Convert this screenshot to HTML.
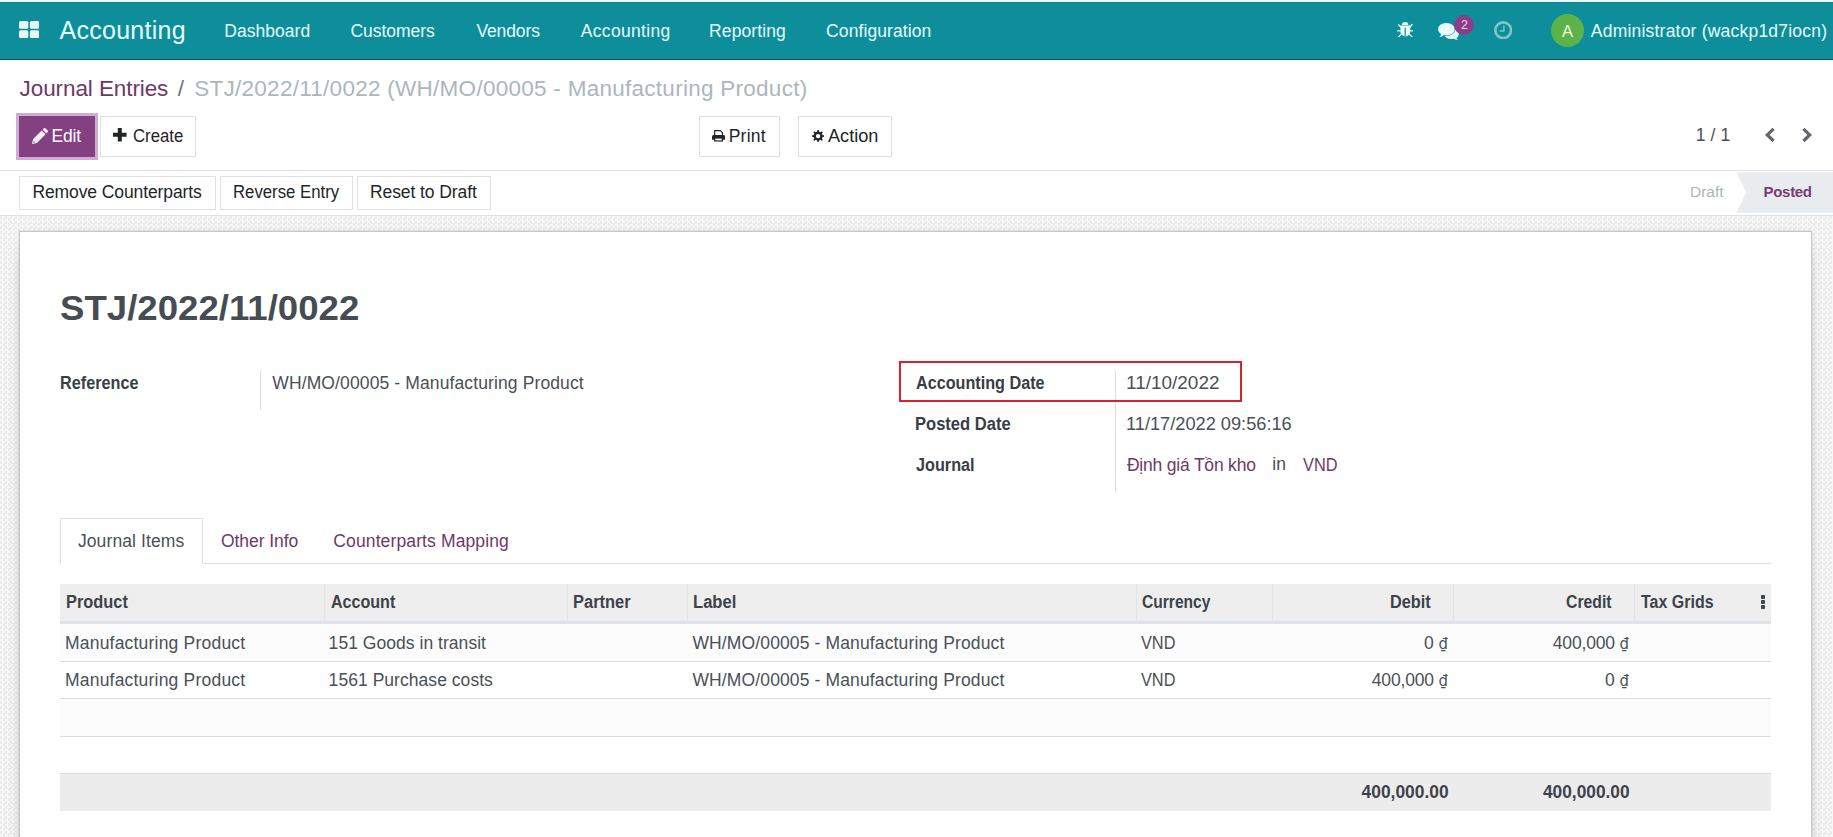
<!DOCTYPE html>
<html lang="en">
<head>
<meta charset="utf-8">
<title>Odoo - STJ/2022/11/0022</title>
<style>
*{box-sizing:border-box;margin:0;padding:0}
html,body{width:1833px;height:837px;overflow:hidden;background:#fff}
body{font-family:"Liberation Sans","DejaVu Sans",sans-serif;font-size:17.5px;color:#495057;position:relative;line-height:1.5}
a{text-decoration:none;color:inherit}
ul,ol{list-style:none}
button{font-family:inherit;cursor:pointer}
.abs{position:absolute;white-space:nowrap}
svg{display:block}

/* ---------- top strip + navbar ---------- */
#strip{position:absolute;left:0;top:0;width:1833px;height:2px;background:#e6fdfd}
#nav{position:absolute;left:0;top:2px;width:1833px;height:58px;background:#0d8e9a;border-bottom:1px solid #0b5561;color:#fff;box-shadow:inset 0 1px 0 #1e7d8c}
#nav .abs{color:#e6fdff}
header .menu{font-size:17.5px;line-height:20px;top:19px}
#brand{font-size:25px;line-height:30px;top:13px;left:59px}

/* ---------- control panel ---------- */
#cp{position:absolute;left:0;top:60px;width:1833px;height:111px;background:#fff;border-bottom:1px solid #e2e2e2}
.bc{font-size:22.5px;line-height:28px;top:14px}
.btn{position:absolute;height:41px;border:1px solid #e1e1e1;background:#fff;color:#212529;font-size:17.5px}
.btn .abs{line-height:20px;top:9px}
#btn-edit{left:19px;top:56px;width:76px;background:#834182;border-color:#834182;color:#fff;box-shadow:0 0 0 3px #d0add0}

/* ---------- status bar ---------- */
#sb{position:absolute;left:0;top:171px;width:1833px;height:45px;background:#fff;border-bottom:1px solid #dfe1e3}
.sbtn{position:absolute;top:5px;height:34px;border:1px solid #e1e1e1;background:#fff;color:#212529;font-size:17.5px}
.sbtn .abs{line-height:20px;top:6px}

/* ---------- content ---------- */
#bg{position:absolute;left:0;top:216px;width:1833px;height:621px;background:repeating-conic-gradient(#f8f8f8 0 25%,#ebebeb 0 50%) 0 0/5px 5px}
#sheet{position:absolute;left:19px;top:15px;width:1793px;height:640px;background:#fff;border:1px solid #c4c6c8;box-shadow:0 0 2px rgba(0,0,0,.16),0 5px 20px -15px #000}
/* coordinates inside #sheet are page coords minus (20,232) */
#title{font-size:35px;font-weight:bold;line-height:40px;color:#464c53;left:41px;top:56px}
.lbl{font-weight:bold;color:#383e45;line-height:20px}
.val{color:#495057;line-height:20px}
.lnk{color:#6c3a68}
.vsep{position:absolute;width:1px;background:#dcdfe2}
#redbox{position:absolute;left:879px;top:129px;width:343px;height:41px;border:2px solid #d8232a}
.tab{font-size:17.5px;line-height:20px;top:299px;color:#6c3a68}
#tabline{position:absolute;left:40px;top:331px;width:1711px;height:1px;background:#e0e0e0}
#tabact{position:absolute;left:40px;top:286px;width:143px;height:46px;border:1px solid #e0e0e0;border-bottom:1px solid #fff;background:#fff}
/* table */
#tbl{position:absolute;left:40px;top:352px;width:1711px;border-collapse:separate;border-spacing:0;table-layout:fixed;font-size:17.5px}
#tbl th,#tbl td{padding:0;position:relative;white-space:nowrap;overflow:visible}
#tbl thead th{height:40px;background:#eeeeee;border-bottom:3px solid #dfe2e6;border-left:1px solid #e2e4e6;font-weight:bold;color:#3d434a;text-align:left}
#tbl thead th:first-child{border-left:0}
#tbl tbody td{border-bottom:1px solid #d9dcdf}
#tbl tbody tr:nth-child(1) td{height:38px;background:#fcfcfc}
#tbl tbody tr:nth-child(2) td{height:37px}
#tbl tbody tr:nth-child(3) td{height:38px;background:#fcfcfc}
#tbl tbody tr:nth-child(4) td{height:36px;border-bottom:0}
#tbl tfoot td{height:38px;background:#ececec;border-top:1px solid #d9d9d9;font-weight:bold;color:#3d434a}
table .abs{line-height:20px;top:9px}
.dong{font-family:"DejaVu Sans Condensed","DejaVu Sans",sans-serif;font-size:16.5px;letter-spacing:0}
#r1c6,#r1c7,#r2c6,#r2c7{right:5px}
#r1c7,#r2c6{letter-spacing:-0.17px}
thead .abs{top:8px}
#f6,#f7{font-size:18.5px}
/*TUNE-START*/
#brand{left:59.61px;top:13.02px;letter-spacing:0.256px}
#m1{left:224.30px;top:19.02px;letter-spacing:0.026px}
#m2{left:350.50px;top:19.02px;letter-spacing:-0.057px}
#m3{left:476.41px;top:19.02px;letter-spacing:-0.111px}
#m4{left:580.80px;top:19.02px;letter-spacing:0.315px}
#m5{left:709.11px;top:19.02px;letter-spacing:0.105px}
#m6{left:826.11px;top:19.02px;letter-spacing:0.085px}
#user{left:1590.80px;top:19.02px;letter-spacing:0.212px}
#bc1{left:19.61px;top:15.02px;letter-spacing:-0.095px}
#bc2{left:177.71px;top:15.02px}
#bc3{left:194.21px;top:15.02px;letter-spacing:0.271px}
#t-edit{left:31.50px;top:9.02px;letter-spacing:-0.165px}
#t-create{left:31.80px;top:9.02px;letter-spacing:0;transform:scaleX(0.9576);transform-origin:0 50%}
#t-print{left:28.71px;top:9.02px;letter-spacing:0.244px}
#t-action{left:29.00px;top:9.02px;letter-spacing:0;transform:scaleX(1.0374);transform-origin:0 50%}
#pager{left:1695.71px;top:65.02px;letter-spacing:0.143px}
#s1{left:12.41px;top:5.02px;letter-spacing:-0.103px}
#s2{left:11.95px;top:5.02px;letter-spacing:0;transform:scaleX(0.9571);transform-origin:0 50%}
#s3{left:12.00px;top:5.02px;letter-spacing:-0.085px}
#title{left:39.95px;top:56.02px;letter-spacing:0;transform:scaleX(1.0463);transform-origin:0 50%}
#l-ref{left:40.07px;top:141.02px;letter-spacing:0;transform:scaleX(0.9272);transform-origin:0 50%}
#v-ref{left:252.30px;top:141.02px;letter-spacing:0.118px}
#l-acc{left:896.30px;top:141.02px;letter-spacing:0;transform:scaleX(0.9245);transform-origin:0 50%}
#v-acc{left:1106.02px;top:141.02px;letter-spacing:0;transform:scaleX(1.0832);transform-origin:0 50%}
#l-post{left:895.36px;top:182.02px;letter-spacing:0;transform:scaleX(0.9451);transform-origin:0 50%}
#v-post{left:1106.07px;top:182.02px;letter-spacing:0;transform:scaleX(1.0403);transform-origin:0 50%}
#l-jrn{left:896.30px;top:223.02px;letter-spacing:0;transform:scaleX(0.9269);transform-origin:0 50%}
#v-jrn{left:1106.91px;top:223.02px;letter-spacing:-0.198px}
#v-in{left:1252.21px;top:222.02px;letter-spacing:0.208px}
#v-cur{left:1283.21px;top:223.02px;letter-spacing:0;transform:scaleX(0.9335);transform-origin:0 50%}
#tab1{left:57.91px;top:299.02px;letter-spacing:0.109px}
#tab2{left:200.91px;top:299.02px;letter-spacing:-0.044px}
#tab3{left:313.30px;top:299.02px;letter-spacing:0.125px}
#h1{left:5.97px;top:8.02px;letter-spacing:0;transform:scaleX(0.9357);transform-origin:0 50%}
#h2{left:5.91px;top:8.02px;letter-spacing:0;transform:scaleX(0.9177);transform-origin:0 50%}
#h3{left:4.67px;top:8.02px;letter-spacing:0;transform:scaleX(0.9409);transform-origin:0 50%}
#h4{left:4.55px;top:8.02px;letter-spacing:0;transform:scaleX(0.9485);transform-origin:0 50%}
#h5{left:5.41px;top:8.02px;letter-spacing:0;transform:scaleX(0.8909);transform-origin:0 50%}
#h6{right:22.47px;left:auto;top:8.02px;letter-spacing:0;transform:scaleX(0.9319);transform-origin:100% 50%}
#h7{right:22.36px;left:auto;top:8.02px;letter-spacing:0;transform:scaleX(0.9008);transform-origin:100% 50%}
#h8{left:5.91px;top:8.02px;letter-spacing:0;transform:scaleX(0.9134);transform-origin:0 50%}
#r1c1{left:5.00px;top:9.02px;letter-spacing:0.204px}
#r1c2{left:4.61px;top:9.02px;letter-spacing:0.039px}
#r1c4{left:5.41px;top:9.02px;letter-spacing:0.132px}
#r1c5{left:5.30px;top:9.02px;letter-spacing:0;transform:scaleX(0.9307);transform-origin:0 50%}
#r2c1{left:5.00px;top:8.02px;letter-spacing:0.204px}
#r2c2{left:4.61px;top:8.02px;letter-spacing:0.045px}
#r2c4{left:5.41px;top:8.02px;letter-spacing:0.132px}
#r2c5{left:5.30px;top:8.02px;letter-spacing:0;transform:scaleX(0.9307);transform-origin:0 50%}
#f6{right:4.63px;left:auto;top:8.02px;letter-spacing:0;transform:scaleX(0.9393);transform-origin:100% 50%}
#f7{right:4.34px;left:auto;top:8.02px;letter-spacing:0;transform:scaleX(0.9360);transform-origin:100% 50%}
#st-draft{left:1690.24px;top:12.02px;letter-spacing:0;transform:scaleX(1.0693);transform-origin:0 50%}
#st-posted{left:1763.61px;top:12.02px;letter-spacing:-0.331px}
#badge-n{left:1460.91px;top:16.02px}
#avatar-a{left:1562.00px;top:19.02px}
#r1c6{top:9.02px}
#r1c7{top:9.02px}
#r2c6{top:8.02px}
#r2c7{top:8.02px}
/*TUNE-END*/
</style>
</head>
<body>
<div id="strip"></div>

<header id="nav">
  <a class="abs" id="apps" style="left:19px;top:19px"><svg width="20.4" height="17.5" viewBox="0 0 21 18" preserveAspectRatio="none"><rect x="0" y="0" width="9.6" height="8" rx="1.6" fill="#e8f8fa"/><rect x="11.2" y="0" width="9.6" height="8" rx="1.6" fill="#e8f8fa"/><rect x="0" y="9.6" width="9.6" height="8" rx="1.6" fill="#e8f8fa"/><rect x="11.2" y="9.6" width="9.6" height="8" rx="1.6" fill="#e8f8fa"/></svg></a>
  <a class="abs" id="brand">Accounting</a>
  <nav>
    <a class="abs menu" id="m1">Dashboard</a>
    <a class="abs menu" id="m2">Customers</a>
    <a class="abs menu" id="m3">Vendors</a>
    <a class="abs menu" id="m4">Accounting</a>
    <a class="abs menu" id="m5">Reporting</a>
    <a class="abs menu" id="m6">Configuration</a>
  </nav>

  <a class="abs" id="i-bug" style="left:1396.8px;top:19.7px"><svg width="16.5" height="15.4" viewBox="0 0 16.5 15.4"><path d="M3.900 5.300L1.200 2.300M12.700 5.300l2.700-3M3.600 8.800H0.200M13.100 8.800h3.400M4.400 12.300L1.200 15M12.200 12.300l3.200 2.700" stroke="#dffcfd" stroke-width="1.300" fill="none"/><path d="M4.900 3.100a3.250 3.100 0 0 1 6.500 0z" fill="#e3fcfd"/><path d="M3.400 3.600h9.900v6.300a4.950 4.500 0 0 1-9.900 0z" fill="#e9fbfc"/><rect x="7.500" y="5.700" width="1.400" height="8.400" fill="#2f9aa4"/></svg></a>
  <a class="abs" id="i-chat" style="left:1437.5px;top:20.9px"><svg width="21.200" height="16.800" viewBox="0 0 21.2 16.8"><path d="M13.600 6c4 0 7.300 2.300 7.300 5.200 0 1.500-.900 2.900-2.400 3.800.3.700.8 1.300 1.500 1.700-1.700.1-3.100-.3-4.200-.9-.7.200-1.400.2-2.200.2-4 0-7.300-2.100-7.300-4.800S9.600 6 13.600 6z" fill="#dffbfc"/><path d="M8.350 0C12.960 0 16.700 2.780 16.700 6.200S12.960 12.400 8.350 12.400C7.500 12.400 6.700 12.300 5.900 12.100 4.700 13.300 3.100 14 1.200 14.100 2.300 13.200 2.900 12.100 3.100 10.900 1.200 9.700 0 8 0 6.200 0 2.780 3.740 0 8.350 0z" fill="#eafcfd" stroke="#0d8e9a" stroke-width="1.100" paint-order="stroke"/></svg></a>
  <span class="abs" id="badge" style="left:1454.1px;top:12.900px;width:20.400px;height:20.400px;border-radius:50%;background:#8a3e8a"></span>
  <span class="abs" id="badge-n" style="font-size:12.5px;line-height:14px;color:#f9d2f5">2</span>
  <a class="abs" id="i-clock" style="left:1493.9px;top:19.1px"><svg width="18.4" height="18.4" viewBox="0 0 18.4 18.4"><circle cx="9.2" cy="9.2" r="7.85" fill="none" stroke="#7ec5cc" stroke-width="2.6"/><path d="M9.9 4.6v5.4H5.7" fill="none" stroke="#7ec5cc" stroke-width="1.5"/></svg></a>
  <span class="abs" id="avatar" style="left:1551px;top:12.3px;width:33px;height:33px;border-radius:50%;background:#5cb34a"></span>
  <span class="abs" id="avatar-a" style="font-size:16.5px;line-height:20px;color:#f4fbe3">A</span>
  <a class="abs menu" id="user">Administrator (wackp1d7iocn)</a>
</header>

<section id="cp">
  <ol>
    <li class="abs bc" id="bc1" style="color:#6c3a68">Journal Entries</li>
    <li class="abs bc" id="bc2" style="color:#6c757d">/</li>
    <li class="abs bc" id="bc3" style="color:#adb5bd">STJ/2022/11/0022 (WH/MO/00005 - Manufacturing Product)</li>
  </ol>
  <button class="btn" id="btn-edit"><svg class="abs" style="left:11.900px;top:11px" width="16" height="16" viewBox="0 0 16 16"><path d="M0 16L1.100 11.100 9.750 2.450 13.550 6.250 4.900 14.900z" fill="#fbeffa"/><path d="M10.600 1.600L11.750.450a1.350 1.350 0 0 1 1.900 0l1.900 1.900a1.350 1.350 0 0 1 0 1.900L14.400 5.400z" fill="#fbeffa"/><circle cx="2" cy="14" r=".75" fill="#834182"/></svg><span class="abs" id="t-edit">Edit</span></button>
  <button class="btn" id="btn-create" style="left:100px;top:56px;width:96px"><svg class="abs" style="left:12.4px;top:11.4px" width="13.6" height="13.6" viewBox="0 0 13.6 13.6"><path d="M4.8 0h4v4.800h4.800v4h-4.800v4.800h-4v-4.800h-4.800v-4h4.800z" fill="#212529"/></svg><span class="abs" id="t-create">Create</span></button>
  <button class="btn" id="btn-print" style="left:699px;top:56px;width:81px"><svg class="abs" style="left:12.1px;top:13.2px" width="13.1" height="11.6" viewBox="0 0 13.1 11.6"><path d="M2.7 5V0.6h5.600l2.100 2.100V5" fill="#fff" stroke="#212529" stroke-width="1.2"/><path d="M1.500 4.900h10.100a1.500 1.500 0 0 1 1.500 1.500v3.400h-13.100v-3.400a1.500 1.500 0 0 1 1.500-1.500z" fill="#212529"/><rect x="2.7" y="8" width="7.700" height="3" fill="#fff" stroke="#212529" stroke-width="1.2"/></svg><span class="abs" id="t-print">Print</span></button>
  <button class="btn" id="btn-action" style="left:798px;top:56px;width:94px"><svg class="abs" style="left:12.7px;top:13.2px" width="12.2" height="12.2" viewBox="0 0 12.2 12.2"><path fill-rule="evenodd" d="M10.63 5.27 L12.16 5.38 L12.16 6.82 L10.63 6.93 L9.88 8.72 L10.89 9.88 L9.88 10.89 L8.72 9.88 L6.93 10.63 L6.82 12.16 L5.38 12.16 L5.27 10.63 L3.48 9.88 L2.32 10.89 L1.31 9.88 L2.32 8.72 L1.57 6.93 L0.04 6.82 L0.04 5.38 L1.57 5.27 L2.32 3.48 L1.31 2.32 L2.32 1.31 L3.48 2.32 L5.27 1.57 L5.38 0.04 L6.82 0.04 L6.93 1.57 L8.72 2.32 L9.88 1.31 L10.89 2.32 L9.88 3.48Z M6.1 3.900a2.200 2.200 0 1 0 0 4.400a2.200 2.200 0 1 0 0-4.400z" fill="#212529"/></svg><span class="abs" id="t-action">Action</span></button>
  <span class="abs" id="pager" style="line-height:20px;color:#495057">1 / 1</span>

  <a class="abs" id="pg-prev" style="left:1763.5px;top:67px"><svg width="12" height="16" viewBox="0 0 12 16"><path d="M9.600 1.800L3.300 7.900l6.300 6.100" fill="none" stroke="#63676c" stroke-width="3.200"/></svg></a>
  <a class="abs" id="pg-next" style="left:1800.5px;top:67px"><svg width="12" height="16" viewBox="0 0 12 16"><path d="M2.400 1.800l6.300 6.100-6.300 6.100" fill="none" stroke="#63676c" stroke-width="3.200"/></svg></a>
</section>

<section id="sb">
  <button class="sbtn" style="left:19px;width:197px"><span class="abs" id="s1">Remove Counterparts</span></button>
  <button class="sbtn" style="left:220px;width:133px"><span class="abs" id="s2">Reverse Entry</span></button>
  <button class="sbtn" style="left:357px;width:134px"><span class="abs" id="s3">Reset to Draft</span></button>

  <svg class="abs" style="left:1730px;top:1px" width="103" height="41" viewBox="0 0 103 41"><path d="M6.300 0.300H103V40.800H6.300L16.300 20.500z" fill="#e9ecef"/></svg>
  <span class="abs" id="st-draft" style="font-size:14.500px;line-height:18px;color:#adb5bd">Draft</span>
  <span class="abs" id="st-posted" style="font-size:15px;font-weight:bold;line-height:18px;color:#7c3a78">Posted</span>
</section>

<main id="bg">
  <div id="sheet">
    <h1 class="abs" id="title">STJ/2022/11/0022</h1>

    <label class="abs lbl" id="l-ref">Reference</label>
    <div class="vsep" style="left:240px;top:138px;height:40px"></div>
    <span class="abs val" id="v-ref">WH/MO/00005 - Manufacturing Product</span>

    <label class="abs lbl" id="l-acc">Accounting Date</label>
    <span class="abs val" id="v-acc">11/10/2022</span>
    <label class="abs lbl" id="l-post">Posted Date</label>
    <span class="abs val" id="v-post">11/17/2022 09:56:16</span>
    <label class="abs lbl" id="l-jrn">Journal</label>
    <a class="abs val lnk" id="v-jrn">Định giá Tồn kho</a>
    <span class="abs val" id="v-in">in</span>
    <a class="abs val lnk" id="v-cur">VND</a>
    <div class="vsep" style="left:1095px;top:138px;height:123px"></div>
    <div id="redbox"></div>

    <div id="tabline"></div>
    <div id="tabact"></div>
    <a class="abs tab" id="tab1" style="color:#495057">Journal Items</a>
    <a class="abs tab" id="tab2">Other Info</a>
    <a class="abs tab" id="tab3">Counterparts Mapping</a>

    <table id="tbl">
      <colgroup><col style="width:264px"><col style="width:243px"><col style="width:120px"><col style="width:449px"><col style="width:136px"><col style="width:181px"><col style="width:181px"><col style="width:137px"></colgroup>
      <thead><tr>
        <th><span class="abs" id="h1">Product</span></th>
        <th><span class="abs" id="h2">Account</span></th>
        <th><span class="abs" id="h3">Partner</span></th>
        <th><span class="abs" id="h4">Label</span></th>
        <th><span class="abs" id="h5">Currency</span></th>
        <th><span class="abs" id="h6">Debit</span></th>
        <th><span class="abs" id="h7">Credit</span></th>
        <th><span class="abs" id="h8">Tax Grids</span><svg class="abs" style="left:126px;top:11px" width="4" height="14" viewBox="0 0 4 14"><rect width="4" height="4" rx="0.8" fill="#3f454c"/><rect y="5" width="4" height="4" rx="0.8" fill="#3f454c"/><rect y="10" width="4" height="4" rx="0.8" fill="#3f454c"/></svg></th>
      </tr></thead>
      <tbody>
        <tr>
          <td><span class="abs" id="r1c1">Manufacturing Product</span></td>
          <td><span class="abs" id="r1c2">151 Goods in transit</span></td>
          <td></td>
          <td><span class="abs" id="r1c4">WH/MO/00005 - Manufacturing Product</span></td>
          <td><span class="abs" id="r1c5">VND</span></td>
          <td><span class="abs" id="r1c6">0 <span class="dong">₫</span></span></td>
          <td><span class="abs" id="r1c7">400,000 <span class="dong">₫</span></span></td>
          <td></td>
        </tr>
        <tr>
          <td><span class="abs" id="r2c1">Manufacturing Product</span></td>
          <td><span class="abs" id="r2c2">1561 Purchase costs</span></td>
          <td></td>
          <td><span class="abs" id="r2c4">WH/MO/00005 - Manufacturing Product</span></td>
          <td><span class="abs" id="r2c5">VND</span></td>
          <td><span class="abs" id="r2c6">400,000 <span class="dong">₫</span></span></td>
          <td><span class="abs" id="r2c7">0 <span class="dong">₫</span></span></td>
          <td></td>
        </tr>
        <tr><td colspan="8"></td></tr>
        <tr><td colspan="8"></td></tr>
      </tbody>
      <tfoot><tr>
        <td colspan="5"></td>
        <td><span class="abs" id="f6">400,000.00</span></td>
        <td><span class="abs" id="f7">400,000.00</span></td>
        <td></td>
      </tr></tfoot>
    </table>
  </div>
</main>
</body>
</html>
